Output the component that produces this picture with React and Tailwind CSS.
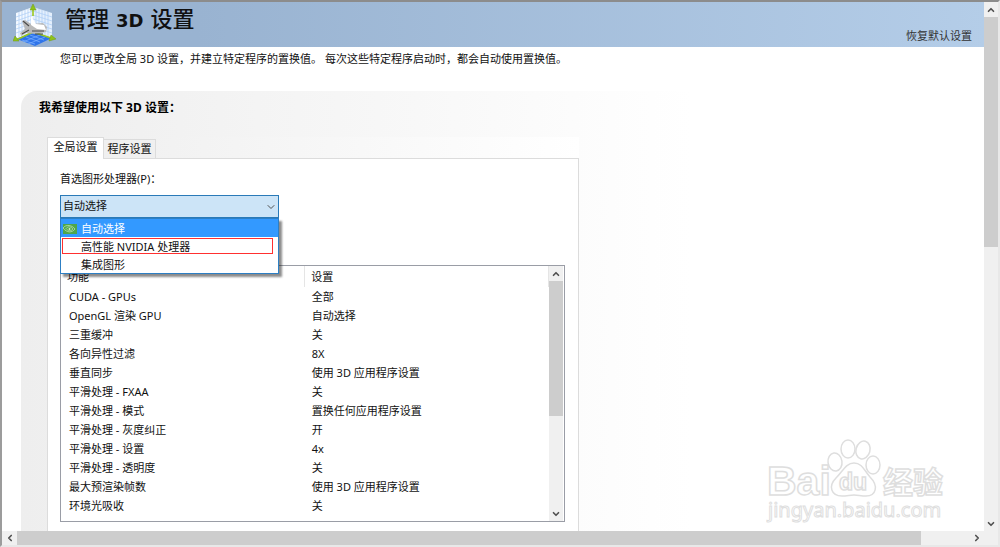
import React, { useState } from 'react';
import { ChevronUp, ChevronDown, ChevronLeft, ChevronRight } from 'lucide-react';

const PROCESSORS = ['自动选择', '高性能 NVIDIA 处理器', '集成图形'];

const FEATURES = [
  { name: 'CUDA - GPUs', value: '全部' },
  { name: 'OpenGL 渲染 GPU', value: '自动选择' },
  { name: '三重缓冲', value: '关' },
  { name: '各向异性过滤', value: '8X' },
  { name: '垂直同步', value: '使用 3D 应用程序设置' },
  { name: '平滑处理 - FXAA', value: '关' },
  { name: '平滑处理 - 模式', value: '置换任何应用程序设置' },
  { name: '平滑处理 - 灰度纠正', value: '开' },
  { name: '平滑处理 - 设置', value: '4x' },
  { name: '平滑处理 - 透明度', value: '关' },
  { name: '最大预渲染帧数', value: '使用 3D 应用程序设置' },
  { name: '环境光吸收', value: '关' },
];

const HeaderIcon = () => (
  <svg width="44" height="42" viewBox="0 0 44 42" className="shrink-0" aria-hidden="true">
    <path d="M3 9 L20 3 V28 L3 35 Z" fill="#f4f9ff" />
    <path d="M20 3 L39 9 V35 L20 28 Z" fill="#e4effc" />
    <path
      d="M6 8v26M9 7v25M12 6v25M15 5v25M18 4v25M23 4v25M26 5v25M29 6v25M32 7v25M35 8v25M3 13l17-6 19 6M3 17l17-6 19 6M3 21l17-6 19 6M3 25l17-6 19 6M3 29l17-6 19 6"
      fill="none"
      stroke="#a9ccf5"
      strokeWidth="0.7"
    />
    <path d="M4 35 L20 28 L39 34 L22 42 Z" fill="#2e74ea" />
    <path d="M9 36l13 4M13 33l14 5M17 31l14 5M10 38l17-7M15 40l17-7" stroke="#7db2ff" strokeWidth="0.7" />
    <path d="M20 12V3M20 28L3 36M20 28l18 6" stroke="#9bc81e" strokeWidth="1.6" fill="none" />
    <path d="M20 0l3 6h-6zM0 37l2-5 4 5zM43 35l-5-4-2 6z" fill="#8fc31a" stroke="#6f9a12" strokeWidth="0.5" />
    <path d="M9 17l3-1 6 4 12-1 4 4-1 5-10 2-10-1-5 3-1-3 5-4z" fill="#b9b9b9" />
    <path d="M18 12l5 8 8 1 2 5-9-1-6-4z" fill="#fff" />
    <path d="M10 17l6 5M9 30l7-4M19 27l12 0M22 30l8 0" stroke="#4b4b4b" strokeWidth="1.1" fill="none" />
  </svg>
);

const NvidiaIcon = () => (
  <svg width="14" height="10" viewBox="0 0 14 10" className="shrink-0" aria-hidden="true">
    <rect width="14" height="10" fill="#4fa64b" />
    <path d="M0 4c3-4 9-3 12 1-3 4-8 4-12-1zM3 4.500c2-2.500 5-2 7 .5-2 2.500-5 2-7-.5z" fill="none" stroke="#b9e0b0" strokeWidth="0.8" />
    <circle cx="6.500" cy="5" r="0.900" fill="#d9f0d4" />
  </svg>
);

const Watermark = () => (
  <svg width="182" height="94" viewBox="0 0 182 94" className="pointer-events-none absolute right-9 bottom-0" aria-hidden="true">
    <g fill="#fff" stroke="#dedede" strokeWidth="1.5" fontFamily="'Liberation Sans', 'Noto Sans CJK SC', sans-serif" fontWeight="bold">
      <ellipse cx="69" cy="25" rx="7" ry="9" transform="rotate(-8 69 25)" />
      <ellipse cx="82" cy="12" rx="7" ry="9" />
      <ellipse cx="97" cy="13" rx="7" ry="9" transform="rotate(15 97 13)" />
      <ellipse cx="107" cy="28" rx="7" ry="9" />
      <path d="M88 26c8 0 10 7 16 14 9 9 6 19-4 19-5 0-8-1-12-1s-7 1-12 1c-11 0-14-10-6-18 7-7 10-15 18-15z" />
      <text x="1" y="58" fontSize="41">Bai</text>
      <text x="73" y="53" fontSize="23">du</text>
      <text x="117" y="56" fontSize="30">经验</text>
      <text x="2" y="80" fontSize="20" strokeWidth="1" fontWeight="normal" fontFamily="'Noto Sans', sans-serif">
        jingyan.baidu.com
      </text>
    </g>
  </svg>
);

const arrowButton = 'flex shrink-0 items-center justify-center bg-[#f0f0f0] text-[#505050]';

const VerticalScrollbar = ({ children }) => (
  <div className="flex w-[14px] shrink-0 flex-col bg-[#f0f0f0]">
    <button type="button" aria-label="向上滚动" className={`${arrowButton} h-[15px]`}>
      <ChevronUp size={10} strokeWidth={4} />
    </button>
    <div className="min-h-0 flex-1">{children}</div>
    <button type="button" aria-label="向下滚动" className={`${arrowButton} h-[15px]`}>
      <ChevronDown size={10} strokeWidth={4} />
    </button>
  </div>
);

const ProcessorSelect = () => {
  const [selected, setSelected] = useState(PROCESSORS[0]);

  return (
    <div className="relative mt-2 w-[219px]">
      <select
        id="processor"
        value={selected}
        onChange={(e) => setSelected(e.target.value)}
        className="block h-[23px] w-full appearance-none border border-[#2a7ab8] bg-[#cce4f7] px-[2px] pb-px outline-none"
      >
        {PROCESSORS.map((item) => (
          <option key={item}>{item}</option>
        ))}
      </select>
      <ChevronDown size={12} className="pointer-events-none absolute top-[6px] right-[2px] text-[#505050]" />
      <ul
        role="listbox"
        aria-label="首选图形处理器"
        className="absolute top-full left-0 z-10 w-full border border-[#2d7fc4] bg-white shadow-[3px_3px_2px_rgba(0,0,0,0.45)]"
      >
        {PROCESSORS.map((item, i) => (
          <li key={item} role="option" aria-selected={item === selected}>
            <button
              type="button"
              onClick={() => setSelected(item)}
              className={`relative flex h-[18px] w-full items-center gap-1 pt-px pl-[2px] text-left ${
                item === selected ? 'bg-[#3399ff] text-white' : 'bg-white'
              }`}
            >
              {item === selected ? <NvidiaIcon /> : <span className="w-[14px]" />}
              {item}
              {i === 1 && <span className="absolute inset-y-px right-[5px] left-px border border-[#ff3030]" />}
            </button>
          </li>
        ))}
      </ul>
    </div>
  );
};

const FeatureTable = () => (
  <div className="mt-[47px] mr-[13px] flex h-[257px] border border-[#9a9da6] pr-px">
    <div className="min-w-0 flex-1 overflow-hidden">
      <table className="w-full table-fixed border-collapse text-left">
        <thead>
          <tr className="h-[21px]">
            <th className="w-1/2 border-r border-[#e5e5e5] p-0 pl-[6px] font-normal">功能</th>
            <th className="border-r border-[#e5e5e5] p-0 pl-[6px] font-normal">设置</th>
          </tr>
        </thead>
        <tbody>
          {FEATURES.map((feature) => (
            <tr key={feature.name} className="h-[19px]">
              <td className="p-0 pl-2">{feature.name}</td>
              <td className="p-0 pl-[7px]">{feature.value}</td>
            </tr>
          ))}
        </tbody>
      </table>
    </div>
    <VerticalScrollbar>
      <div className="h-3/5 bg-[#cdcdcd]" />
    </VerticalScrollbar>
  </div>
);

const App = () => {
  const [tab, setTab] = useState('global');

  return (
    <div className="flex h-screen flex-col overflow-hidden border-t-2 border-r-2 border-b-2 border-l-2 border-t-[#8c8c8c] border-r-[#e8e8e8] border-b-[#e8e8e8] border-l-[#9c9c9c] bg-white font-['Noto_Sans','Noto_Sans_CJK_SC',sans-serif] text-[11px] leading-4 text-[#111]">
      <div className="flex min-h-0 flex-1">
        <main className="relative min-w-0 flex-1 overflow-hidden">
          <header className="flex h-[45px] bg-linear-to-r from-[#99b3d1] from-20% to-[#b4cde8] pl-[11px]">
            <div className="pt-[2px]">
              <HeaderIcon />
            </div>
            <h1 className="pt-1 pl-2 font-['DejaVu_Sans','Noto_Sans_CJK_SC',sans-serif] text-[22px] leading-7 font-medium">
              管理 <span className="text-lg font-bold">3D</span> 设置
            </h1>
            <a href="#restore" className="mr-3 mb-[3px] ml-auto self-end text-[#333]">
              恢复默认设置
            </a>
          </header>

          <p className="pt-1 pl-[58px]">
            您可以更改全局 3D 设置，并建立特定程序的置换值。 每次这些特定程序启动时，都会自动使用置换值。
          </p>

          <section className="mt-6 mr-[293px] ml-[19px] h-full rounded-tl-2xl bg-linear-to-r from-[#eeeeee] to-white pt-2">
            <h2 className="pl-[18px] text-xs leading-[18px] font-bold text-black">我希望使用以下 3D 设置：</h2>
            <div className="mt-5 ml-[26px] w-[532px] max-w-full">
              <div className="flex h-[21px] items-end bg-linear-to-r from-[#eeeeee] to-white" role="tablist">
                <button
                  type="button"
                  role="tab"
                  aria-selected={tab === 'global'}
                  onClick={() => setTab('global')}
                  className="relative z-10 -mb-px h-[22px] w-[57px] border border-b-0 border-[#dcdcdc] bg-white pb-[3px]"
                >
                  全局设置
                </button>
                <button
                  type="button"
                  role="tab"
                  aria-selected={tab === 'program'}
                  onClick={() => setTab('program')}
                  className="h-[19px] w-[52px] border border-b-0 border-l-0 border-[#dcdcdc] bg-[#f0f0f0]"
                >
                  程序设置
                </button>
              </div>
              <div className="border border-b-0 border-[#dcdcdc] bg-white pt-3 pb-8 pl-3">
                <label htmlFor="processor" className="block">
                  首选图形处理器(P)：
                </label>
                <ProcessorSelect />
                <FeatureTable />
              </div>
            </div>
          </section>
          <Watermark />
        </main>
        <VerticalScrollbar>
          <div className="h-[46%] bg-[#cdcdcd]" />
        </VerticalScrollbar>
      </div>

      <div className="flex h-[14px] shrink-0 bg-[#f0f0f0] pr-[14px]">
        <button type="button" aria-label="向左滚动" className={`${arrowButton} w-[15px]`}>
          <ChevronLeft size={10} strokeWidth={4} />
        </button>
        <div className="min-w-0 flex-1">
          <div className="h-full w-[95%] bg-[#cdcdcd]" />
        </div>
        <button type="button" aria-label="向右滚动" className={`${arrowButton} w-[15px]`}>
          <ChevronRight size={10} strokeWidth={4} />
        </button>
      </div>
    </div>
  );
};

export default App;
